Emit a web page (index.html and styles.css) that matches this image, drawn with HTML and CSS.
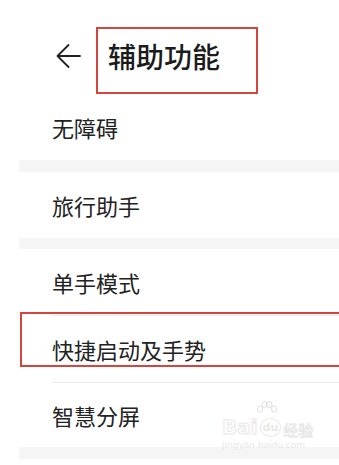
FILE: index.html
```
<!DOCTYPE html>
<html lang="zh">
<head>
<meta charset="utf-8">
<link rel="stylesheet" href="styles.css">
</head>
<body>
<div class="page">
  <header class="header">
    <svg class="back" width="26" height="26" viewBox="0 0 26 26" fill="none" stroke="#222" stroke-width="1.8" stroke-linecap="round" stroke-linejoin="round">
      <path d="M25 13H2.5M13.5 2L2.5 13L13.5 24"/>
    </svg>
    <div class="title-box"><h1 class="title">辅助功能</h1></div>
  </header>
  <div class="list">
    <div class="group">
      <div class="item">无障碍</div>
    </div>
    <div class="gap"></div>
    <div class="group">
      <div class="item">旅行助手</div>
    </div>
    <div class="gap gap-b"></div>
    <div class="group group-rel">
      <div class="item">单手模式</div>
      <div class="item divided">快捷启动及手势</div>
      <div class="item divided last">智慧分屏</div>
      <div class="highlight"></div>
      <div class="watermark">
        <svg class="wm-paw" width="22" height="18" viewBox="0 0 22 18" fill="none" stroke="#e4e4e4" stroke-width="1.2">
          <ellipse cx="4" cy="8" rx="2.5" ry="3"/>
          <ellipse cx="8.5" cy="3.5" rx="2.5" ry="3"/>
          <ellipse cx="13.5" cy="3.5" rx="2.5" ry="3"/>
          <ellipse cx="18" cy="8" rx="2.5" ry="3"/>
        </svg>
        <div class="wm-top"><span class="wm-bai">Bai</span><span class="wm-du">du</span><span class="wm-jy">经验</span></div>
        <div class="wm-url">jingyan.baidu.com</div>
      </div>
    </div>
    <div class="gap"></div>
  </div>
</div>
</body>
</html>
```
FILE: styles.css
```
html, body {
  margin: 0;
  padding: 0;
  overflow: hidden;
  background: #fff;
}
body {
  font-family: "Noto Sans CJK SC", "Noto Sans", sans-serif;
  color: #222;
}
.page {
  width: 339px;
  height: 465px;
  overflow: hidden;
}
.header {
  display: flex;
  align-items: center;
  padding: 27px 0 0 55px;
  height: 67px;
}
.back {
  margin-bottom: 9px;
  flex: none;
}
.title-box {
  margin-left: 15px;
  height: 67px;
  box-sizing: border-box;
  border: 2px solid #d6453d;
  padding: 0 36px 10px 10px;
  display: flex;
  align-items: center;
}
.title {
  margin: 0;
  font-size: 28px;
  font-weight: 500;
  line-height: 1;
  color: #1c1c1c;
}
.list {
  margin-left: 19px;
}
.group {
  background: #fff;
}
.group-rel {
  position: relative;
}
.gap {
  height: 12px;
  background: #f5f5f5;
}
.gap-b {
  height: 11px;
}
.item {
  margin-left: 33px;
  height: 66px;
  display: flex;
  align-items: center;
  font-size: 22px;
  line-height: 1;
  color: #222;
}
.divided {
  border-top: 1px solid #ececec;
}
.last {
  height: 64px;
}
.highlight {
  position: absolute;
  left: 1px;
  right: -6px;
  top: 63px;
  height: 55px;
  box-sizing: border-box;
  border: 2px solid #d6453d;
}
.watermark {
  position: absolute;
  left: 203px;
  top: 152px;
  color: #ebebeb;
  font-family: "DejaVu Sans", sans-serif;
}
.wm-paw {
  display: block;
  margin-left: 34px;
  margin-bottom: -2px;
}
.wm-top {
  display: flex;
  align-items: flex-end;
  gap: 2px;
}
.wm-bai {
  font-size: 20px;
  font-weight: bold;
  line-height: 1;
  color: #fff;
  -webkit-text-stroke: 1px #e8e8e8;
}
.wm-du {
  font-size: 11px;
  font-weight: bold;
  line-height: 1;
  border: 1.5px solid #e8e8e8;
  border-radius: 50%;
  padding: 3px 2px;
  color: #e8e8e8;
}
.wm-jy {
  font-family: "Noto Sans CJK SC", sans-serif;
  font-size: 15px;
  line-height: 1;
  color: #fff;
  -webkit-text-stroke: 0.8px #e6e6e6;
}
.wm-url {
  font-size: 9px;
  line-height: 1;
  margin-top: 4px;
  color: #e8e8e8;
}
```
